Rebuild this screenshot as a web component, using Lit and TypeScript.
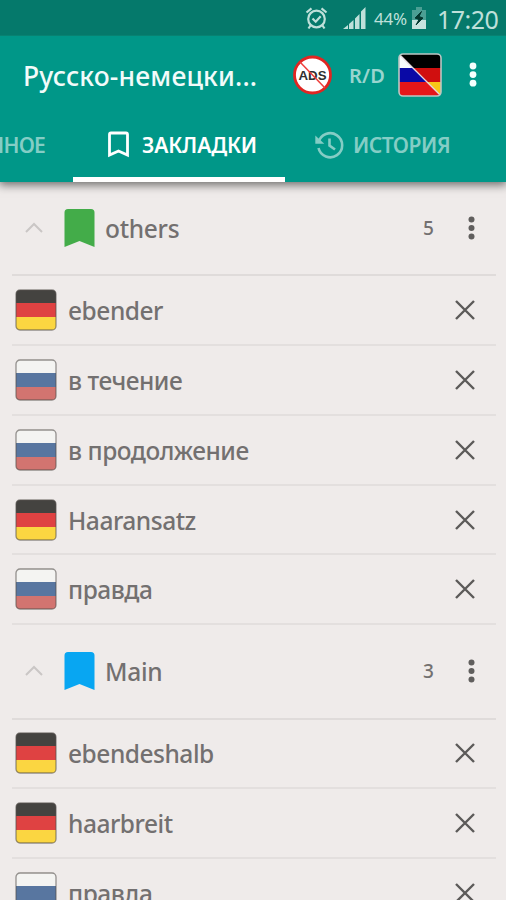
import { LitElement, html, css, svg } from "lit";
import { customElement, property } from "lit/decorators.js";

type Lang = "de" | "ru";
interface Entry { lang: Lang; word: string; }
interface Group { name: string; color: string; count: number; entries: Entry[]; }

const GROUPS: Group[] = [
  {
    name: "others", color: "#43ac49", count: 5,
    entries: [
      { lang: "de", word: "ebender" },
      { lang: "ru", word: "в течение" },
      { lang: "ru", word: "в продолжение" },
      { lang: "de", word: "Haaransatz" },
      { lang: "ru", word: "правда" },
    ],
  },
  {
    name: "Main", color: "#08a6f2", count: 3,
    entries: [
      { lang: "de", word: "ebendeshalb" },
      { lang: "de", word: "haarbreit" },
      { lang: "ru", word: "правда" },
    ],
  },
];

const STRIPES: Record<Lang, string[]> = {
  de: ["#444340", "#df4242", "#fbd641"],
  ru: ["#f4f4f2", "#5876a0", "#d27470"],
};

@customElement("status-bar")
class StatusBar extends LitElement {
  static styles = css`
    :host { display: flex; height: 36px; background: #05796b; border-bottom: 1px solid #088272; box-sizing: border-box; color: #bfe0da; justify-content: flex-end; align-items: center; padding-right: 9px; }
    svg { display: block; flex: none; }
    .alarm { margin-right: 15px; }
    .signal { margin-right: 8px; }
    .percent { font-size: 17px; width: 34px; letter-spacing: -0.2px; margin-right: 4px; white-space: nowrap; padding-top: 1px; }
    .battery { margin-right: 11px; }
    .time { font-size: 25px; width: 60px; white-space: nowrap; letter-spacing: -0.5px; line-height: 34px; padding-top: 2px; }
  `;
  render() {
    return html`
      <svg class="alarm" width="23" height="24" viewBox="0 0 23 24" fill="none" stroke="currentColor" stroke-width="2.2">
        <circle cx="11.5" cy="13" r="8.3" /><path d="M1.5 6.5 6.5 2.4M21.5 6.5 16.5 2.4M5.5 19.5 3.5 22.5M17.5 19.5l2 3M7.5 12.5l3.2 3.2 5-5.4" />
      </svg>
      <svg class="signal" width="23" height="24" viewBox="0 0 23 24" fill="currentColor">
        <path d="M0 23 5 19V23ZM6 18 10.500 14V23H6ZM12 12.500 16.500 8V23H12ZM18 5.500 22.500 1V23H18Z" />
      </svg>
      <span class="percent">44%</span>
      <svg class="battery" width="14" height="22" viewBox="0 0 14 22">
        <path d="M4 0h6v3h4v19H0V3h4Z" fill="#4b9f94" /><path d="M0 13h14v9H0Z" fill="#c8e3df" />
        <path d="M9.5 4.5 3 11l4 1.5-3 5.5 7-7-4-1.5Z" fill="#03382f" stroke="#03382f" />
      </svg>
      <span class="time">17:20</span>
    `;
  }
}

@customElement("app-toolbar")
class AppToolbar extends LitElement {
  static styles = css`
    :host { display: flex; height: 77px; align-items: center; padding: 1px 27px 0 23px; box-sizing: border-box; }
    svg { display: block; flex: none; }
    .title { width: 270px; font-size: 26.5px; font-weight: 500; color: #f2fbfa; letter-spacing: 0.17px; white-space: nowrap; padding-top: 2px; }
    .dir { width: 49px; margin: 1px 0 0 17px; font-size: 20px; font-weight: 600; color: #99d5cf; letter-spacing: 0.2px; }
    .ads { font: 700 13px "Liberation Sans", sans-serif; }
    .more { margin-left: 27px; }
  `;
  render() {
    return html`
      <span class="title">Русско-немецки...</span>
      <svg class="ads" width="39" height="40" viewBox="0 0 39 40">
        <circle cx="19.5" cy="20" r="18" fill="#fff" stroke="#e02622" stroke-width="2.8" />
        <text x="5.5" y="25" textLength="28" lengthAdjust="spacingAndGlyphs" fill="#303030">ADS</text>
        <path d="M7 7 32 33" stroke="#ee3d3a" stroke-width="1.5" />
      </svg>
      <span class="dir">R/D</span>
      <svg width="44" height="44" viewBox="0 0 44 44">
        <clipPath id="box"><rect x="1" y="1" width="42" height="42" rx="4" /></clipPath>
        <g clip-path="url(#box)">
          <path d="M0 0h44v15H0Z" fill="#000" /><path d="M0 15h44v14H0Z" fill="#d00f0f" /><path d="M0 29h44v15H0Z" fill="#f8c817" />
          <path d="M0 0 15 15H0Z" fill="#f7f9fb" /><path d="M0 15h15L29 29H0Z" fill="#0909a6" /><path d="M0 29h29L44 44H0Z" fill="#e5161a" />
          <path d="M1 1 43 43" stroke="#e5d8df" stroke-width="1.3" />
        </g>
        <rect x="1" y="1" width="42" height="42" rx="4" fill="none" stroke="#bcc6c4" stroke-width="1.6" />
      </svg>
      <svg class="more" width="8" height="26" viewBox="0 0 8 26" fill="#f5fffd">
        <circle cx="4" cy="4" r="3.4" /><circle cx="4" cy="12.6" r="3.4" /><circle cx="4" cy="21.2" r="3.4" />
      </svg>
    `;
  }
}

@customElement("app-tabs")
class AppTabs extends LitElement {
  static styles = css`
    :host { display: flex; height: 69px; color: #84cdc5; font-size: 21px; font-weight: 600; overflow: hidden; }
    .tab { display: flex; align-items: center; box-sizing: border-box; height: 69px; padding-bottom: 6px; white-space: nowrap; flex: none; }
    .first { width: 73px; justify-content: flex-end; padding-right: 28px; letter-spacing: -0.8px; }
    .active { width: 212px; padding-left: 34px; color: #fff; border-bottom: 5px solid #fff; padding-bottom: 1px; }
    .active span { margin-left: 12px; letter-spacing: -0.1px; }
    .last { padding-left: 29px; }
    .last span { margin-left: 9px; letter-spacing: -0.5px; }
    svg { display: block; flex: none; }
  `;
  render() {
    return html`
      <div class="tab first"><span>ИЗБРАННОЕ</span></div>
      <div class="tab active">
        <svg width="23" height="27" viewBox="0 0 23 27" fill="none" stroke="currentColor" stroke-width="2.8">
          <path d="M2.5 24V3.5Q2.5 2 4 2H19Q20.5 2 20.5 3.5V24L11.5 20Z" />
        </svg>
        <span>ЗАКЛАДКИ</span>
      </div>
      <div class="tab last">
        <svg width="30" height="28" viewBox="0 0 30 28" fill="none" stroke="currentColor" stroke-width="2.6">
          <path d="M4.5 11.5A12 12 0 1 1 4.500 17" /><path d="M15.5 7.5v7l5.5 4" /><path d="M1.300 4.500v8.200h9Z" fill="currentColor" stroke="none" />
        </svg>
        <span>ИСТОРИЯ</span>
      </div>
    `;
  }
}

@customElement("group-header")
class GroupHeader extends LitElement {
  @property({ attribute: false }) group!: Group;
  static styles = css`
    :host { display: flex; align-items: center; height: 94.4px; margin: 0 10px 0 12px; box-sizing: border-box; border-bottom: 2px solid #dfdbda; color: #737070; }
    svg { display: block; flex: none; }
    .chevron { margin: 0 21px 0 13px; }
    .name { flex: 1; margin-left: 10px; font-size: 24.5px; font-weight: 500; letter-spacing: -0.3px; padding-top: 1px; }
    .count { width: 12px; font-size: 19px; font-weight: 500; }
    .more { margin: 0 21px 0 33px; }
  `;
  render() {
    return html`
      <svg class="chevron" width="18" height="12" viewBox="0 0 18 12" fill="none" stroke="#cac6c5" stroke-width="2"><path d="M1 10 9 2l8 8" /></svg>
      <svg width="31" height="40" viewBox="0 0 31 40"><path d="M.5 39V4.5Q.5 1 4 1H27Q30.5 1 30.5 4.5V39L15.5 33Z" fill=${this.group.color} /></svg>
      <span class="name">${this.group.name}</span>
      <span class="count">${this.group.count}</span>
      <svg class="more" width="7" height="24" viewBox="0 0 7 24" fill="#605e5d"><circle cx="3.5" cy="3.5" r="3" /><circle cx="3.5" cy="12" r="3" /><circle cx="3.5" cy="20.5" r="3" /></svg>
    `;
  }
}

@customElement("word-row")
class WordRow extends LitElement {
  @property({ attribute: false }) entry!: Entry;
  static styles = css`
    :host { display: flex; align-items: center; height: 69.75px; margin: 0 10px 0 12px; padding: 0 21px 0 3px; box-sizing: border-box; border-bottom: 2px solid #e3dfde; color: #737070; }
    svg { display: block; flex: none; }
    .word { flex: 1; margin-left: 11px; font-size: 24.5px; font-weight: 500; letter-spacing: -0.48px; white-space: nowrap; padding-top: 1px; }
  `;
  render() {
    const stripes = STRIPES[this.entry.lang];
    return html`
      <svg width="42" height="42" viewBox="0 0 42 42">
        <clipPath id="flag"><rect x="1" y="1" width="40" height="40" rx="4" /></clipPath>
        <g clip-path="url(#flag)">${stripes.map((c, i) => svg`<rect y=${i * 14} width="42" height="14.5" fill=${c} />`)}</g>
        <rect x="1" y="1" width="40" height="40" rx="4" fill="none" stroke="#55504c" stroke-opacity=".6" stroke-width="1.3" />
      </svg>
      <span class="word">${this.entry.word}</span>
      <svg width="20" height="20" viewBox="0 0 20 20" stroke="#5c5a59" stroke-width="2.4"><path d="M1 1 19 19M19 1 1 19" /></svg>
    `;
  }
}

@customElement("app-root")
class AppRoot extends LitElement {
  static styles = css`
    :host { display: block; height: 900px; overflow: hidden; background: #efebea; font-family: "Noto Sans", sans-serif; }
    .appbar { background: #009788; position: relative; box-shadow: 0 2px 9px 1px rgba(0, 0, 0, 0.55); }
  `;
  render() {
    return html`
      <div class="appbar"><status-bar></status-bar><app-toolbar></app-toolbar><app-tabs></app-tabs></div>
      ${GROUPS.map((g) => html`
        <group-header .group=${g}></group-header>
        ${g.entries.map((e) => html`<word-row .entry=${e}></word-row>`)}
      `)}
    `;
  }
}
